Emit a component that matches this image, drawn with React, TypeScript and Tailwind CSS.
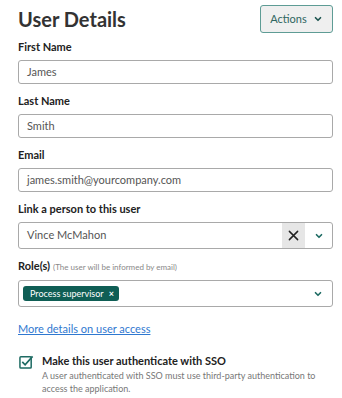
import React from "react";

const Chevron = ({ className = "" }: { className?: string }) => (
  <svg viewBox="0 0 12 12" className={className} fill="none" stroke="currentColor" strokeWidth="2" strokeLinecap="round" strokeLinejoin="round">
    <path d="M3 4.5 L6 7.5 L9 4.5" />
  </svg>
);

function Field({ label, value }: { label: string; value: string }) {
  return (
    <div className="flex flex-col">
      <div className="text-[11px] font-bold text-[#222] leading-[14px]">{label}</div>
      <div className="mt-[6px] h-[24px] rounded-[3px] border border-[#a9a9a9] flex items-center px-[8px] text-[11px] text-[#555]">
        {value}
      </div>
    </div>
  );
}

export default function App() {
  return (
    <div className="w-[342px] h-[398px] bg-white pl-[18px] pr-[9px] pt-[5px] text-[#222] overflow-hidden" style={{ fontFamily: 'Lato, "Open Sans", sans-serif' }}>
      <div className="flex items-start justify-between">
        <h1 className="text-[20px] font-bold text-[#333] leading-[28px]">User Details</h1>
        <button className="h-[28px] w-[73px] rounded-[3px] border border-[#5e9c95] bg-[#efefef] flex items-center justify-center gap-[6px] text-[11px] text-[#2e6660]">
          Actions
          <Chevron className="w-[10px] h-[10px] text-[#1e5550]" />
        </button>
      </div>
      <div className="mt-[7px] flex flex-col gap-[10px]">
        <Field label="First Name" value="James" />
        <Field label="Last Name" value="Smith" />
        <Field label="Email" value="james.smith@yourcompany.com" />
        <div className="flex flex-col">
          <div className="text-[11px] font-bold leading-[14px]">Link a person to this user</div>
          <div className="mt-[6px] h-[27px] rounded-[3px] border border-[#a9a9a9] flex items-center pl-[8px] text-[11px] text-[#555]">
            <span className="flex-1">Vince McMahon</span>
            <div className="w-[23px] h-[25px] bg-[#e6e6e6] flex items-center justify-center">
              <svg viewBox="0 0 12 12" className="w-[11px] h-[11px]" stroke="#222" strokeWidth="1.6" strokeLinecap="round">
                <path d="M1.5 1.5 L10.5 10.5 M10.5 1.5 L1.5 10.5" />
              </svg>
            </div>
            <div className="w-[27px] flex items-center justify-center">
              <Chevron className="w-[10px] h-[10px] text-[#1e6b63]" />
            </div>
          </div>
        </div>
        <div className="flex flex-col">
          <div className="text-[11px] leading-[14px]">
            <span className="font-bold">Role(s)</span>
            <span className="text-[8px] text-[#888] ml-[3px]">(The user will be informed by email)</span>
          </div>
          <div className="mt-[6px] h-[27px] rounded-[3px] border border-[#a9a9a9] flex items-center pl-[4px] pr-[9px]">
            <span className="flex items-center h-[15px] rounded-[3px] bg-[#0f5e55] text-white text-[9px] pl-[7px] pr-[5px] gap-[5px]">
              Process supervisor
              <span className="text-[9px] font-bold">×</span>
            </span>
            <span className="flex-1" />
            <Chevron className="w-[10px] h-[10px] text-[#1e6b63]" />
          </div>
        </div>
      </div>
      <a href="#" className="block mt-[14px] text-[11px] leading-[15px] text-[#2f78d0] underline">More details on user access</a>
      <div className="mt-[17px] flex items-start gap-[8px] pl-[1px]">
        <svg viewBox="0 0 16 16" className="w-[15px] h-[15px] mt-[1px] shrink-0">
          <rect x="1" y="3" width="12" height="12" rx="1" fill="none" stroke="#1e6b63" strokeWidth="1.6" />
          <path d="M3.5 8.5 L6.5 11.5 L14.5 2.5" fill="none" stroke="#1e6b63" strokeWidth="1.8" />
        </svg>
        <div className="flex flex-col">
          <div className="text-[11px] font-bold leading-[15px]">Make this user authenticate with SSO</div>
          <div className="text-[9px] text-[#777] leading-[13px] mt-[1px]">A user authenticated with SSO must use third-party authentication to access the application.</div>
        </div>
      </div>
    </div>
  );
}
